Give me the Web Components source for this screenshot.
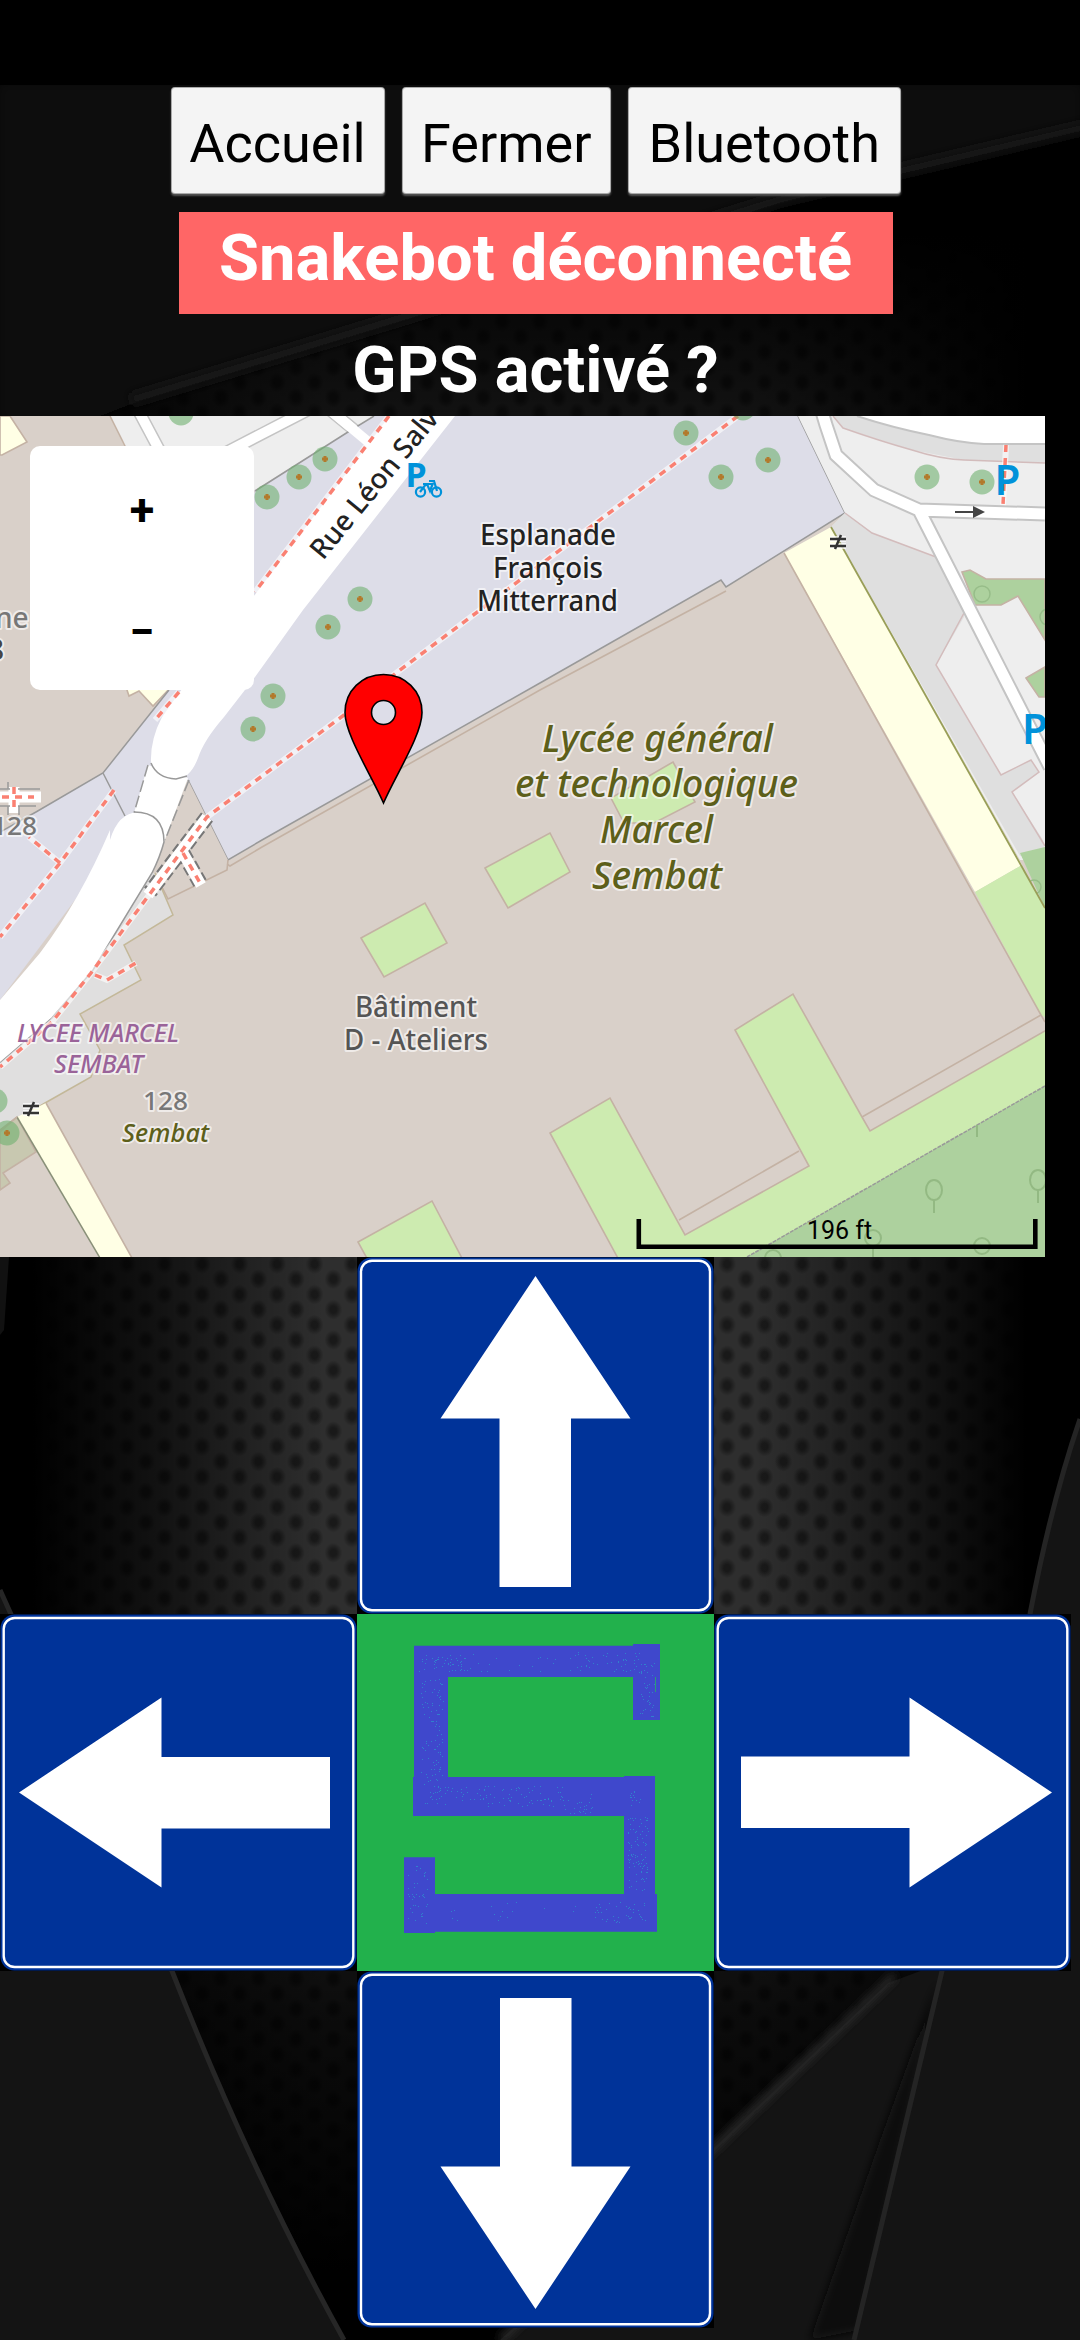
<!DOCTYPE html>
<html lang="fr">
<head>
<meta charset="utf-8">
<title>Snakebot</title>
<style>
body{margin:0;background:#000;font-family:Roboto,sans-serif}
</style>
</head>
<body>
<snake-app></snake-app>
<script>
const define=(name,html,setup)=>customElements.define(name,class extends HTMLElement{
  constructor(){
    super();
    const root=this.attachShadow({mode:'open'});
    const t=document.createElement('template');
    t.innerHTML=html;
    root.append(t.content.cloneNode(true));
    if(setup)setup(this,root);
  }
});

/* Carbon mesh with overlapping dark sheets */
define('carbon-backdrop',`
<style>:host{display:block}svg{display:block;width:100%;height:100%}</style>
<svg viewBox="0 0 1080 2340" preserveAspectRatio="none">
<defs>
<radialGradient id="dot"><stop offset=".35" stop-color="#191919"/><stop offset="1" stop-color="#191919" stop-opacity="0"/></radialGradient>
<pattern id="m" width="37.5" height="30.4" patternUnits="userSpaceOnUse" x="249" y="1264">
<rect width="37.5" height="30.4" fill="#2e2e2e"/>
<ellipse cx="9.4" cy="15.2" rx="9" ry="10" fill="url(#dot)"/>
<ellipse cx="28.1" cy="0" rx="9" ry="10" fill="url(#dot)"/><ellipse cx="28.1" cy="30.4" rx="9" ry="10" fill="url(#dot)"/>
</pattern>
<linearGradient id="h"><stop offset="0.03" stop-color="#000"/><stop offset=".15" stop-color="#000" stop-opacity=".6"/><stop offset=".3" stop-color="#000" stop-opacity="0"/><stop offset=".7" stop-color="#000" stop-opacity="0"/><stop offset=".84" stop-color="#000" stop-opacity=".5"/><stop offset=".95" stop-color="#000"/></linearGradient>
<linearGradient id="v" x2="0" y2="1"><stop offset=".1" stop-color="#000"/><stop offset=".18" stop-color="#000" stop-opacity=".6"/><stop offset=".5" stop-color="#000" stop-opacity="0"/><stop offset=".7" stop-color="#000" stop-opacity="0"/><stop offset=".86" stop-color="#000" stop-opacity=".75"/><stop offset=".97" stop-color="#000"/></linearGradient>
<filter id="b"><feGaussianBlur stdDeviation="4"/></filter>
</defs>
<rect width="1080" height="2340" fill="url(#m)"/>
<rect width="1080" height="2340" fill="url(#h)"/>
<rect width="1080" height="2340" fill="url(#v)"/>
<path d="M0 85H1080V130L778 204L413 318L131 404L90 420H0Z" fill="#0d0d0d" filter="url(#b)"/>
<path d="M1090 126L778 200L413 314L131 400" fill="none" stroke="#191919" stroke-width="12" filter="url(#b)"/>
<path d="M0 1590L172 1971Q250 2170 344 2340H0Z" fill="#141414"/>
<path d="M0 1590L172 1971Q250 2170 344 2340" fill="none" stroke="#262626" stroke-width="5"/>
<path d="M888 1983L716 2146L500 2340H860L950 1960Z" fill="#141414"/>
<path d="M895 1975L716 2146L500 2340" fill="none" stroke="#303030" stroke-width="6" filter="url(#b)"/>
<path d="M938 1980L860 2330L810 2340L880 2140Z" fill="#090909" filter="url(#b)"/>
<path d="M1080 1419Q1052 1500 1030 1614L942 1971L854 2340H1080Z" fill="#141414"/>
<path d="M1080 1419Q1052 1500 1030 1614L942 1971L854 2340" fill="none" stroke="#242424" stroke-width="5"/>
<path d="M0 1257H9L4 1330L0 1335Z" fill="#111"/>
<rect width="1080" height="85" fill="#000"/>
</svg>`);

define('tool-button',`
<style>
:host{display:block}
button{display:flex;align-items:center;justify-content:center;width:100%;height:105px;padding:6px 0 0;border:0;border-radius:3px;background:#f4f4f4;box-shadow:0 0 0 1px #aaa,0 2px 2px 1px #555;color:#000;font:400 54px/63px Roboto,sans-serif;white-space:nowrap}
</style><button><slot></slot></button>`);

define('status-panel',`
<style>
:host{display:flex;flex-direction:column;align-items:center;color:#fff;font-weight:700;font-size:65px;line-height:75px;white-space:nowrap}
.s{box-sizing:border-box;width:714px;height:102px;padding-top:9px;background:#f66;text-align:center}
.g{margin-top:18.5px;height:83.5px}
</style><div class="s"><slot name="robot"></slot></div><div class="g"><slot name="gps"></slot></div>`);

define('zoom-control',`
<style>
:host{display:flex;flex-direction:column;width:224px;height:244px;border-radius:10px;background:#fff;overflow:hidden}
button{flex:1;border:0;background:none;padding:5px 0 0;color:#000;font:700 45px/50px Roboto,sans-serif}
button:first-child{padding-top:10px}
</style><button>+</button><button>−</button>`);

define('map-view',`
<style>
:host{display:block;position:relative;width:1045px;height:841px;overflow:hidden}
svg{display:block}
zoom-control{position:absolute;left:30px;top:30px}
text{font-family:"Noto Sans",sans-serif}
.g,.edge{fill:none;stroke:#999;stroke-width:1.5}
.t{stroke:#c4b2a4;stroke-width:1.6}
.w{fill:none;stroke:#fff}.c{fill:none;stroke:#c4c4c4}
.halo{fill:none;stroke:#fff;stroke-opacity:.6;stroke-width:6}
.foot{fill:none;stroke:#fa8072;stroke-width:3.5;stroke-dasharray:7 6}
.lab{paint-order:stroke;stroke:#fff;stroke-opacity:.6;stroke-width:4px;stroke-linejoin:round;font-weight:500}
</style>
<svg width="1045" height="841" viewBox="0 416 1045 841">
<rect y="416" width="1045" height="841" fill="#d9d0c9"/>
<path d="M0 416H10L27 442L2 455H0ZM127 690L129 696L139 691L153 706L172 686V680H120Z" fill="#ffffe5" class="t"/>
<path d="M110 416L125 446L200 560L255 490L348 432L374 416Z" fill="#eee"/><path d="M110 416L127 450" class="g t"/>
<g class="c" stroke-width="13"><path d="M137 408L162 455M225 453L308 410M330 410L375 447"/></g>
<g class="w" stroke-width="10"><path d="M137 408L162 455M225 453L308 410M330 410L375 447"/></g>
<path d="M0 832L36 812L103 773L169 690L255 491L348 432L374 416H798L845 513L726 587L721 580L540 683L262 840L228 860L188 780L140 830L90 880L0 1000Z" fill="#dddde8"/>
<path d="M0 832L36 812L103 773L169 690M255 491L348 432L374 416M798 416L845 513L726 587L721 580L540 683L262 840L228 860L188 780M103 773L125 816" class="g"/>
<path d="M330 410L378 450" class="w" stroke-width="10"/>
<path d="M726 591L540 690L262 847L230 866L222 861" class="g t"/>
<path d="M188 780L228 860L225 872L168 899L152 873L164 840Z" fill="#d9d0c9"/><path d="M228 860L227 870L168 899L155 873" class="g t"/>
<path d="M152 873L155 873L173 915L124 945L141 980L80 1014L100 1050L91 1077L45 1103L0 1130V1063L93 970Z" fill="#e0dfdf"/>
<path d="M155 873L173 915L124 945L141 980L80 1014L100 1050L91 1077L45 1103L0 1130" class="g" style="stroke:#c3b899"/>
<path d="M0 1130L17 1117L36 1152L3 1173L10 1183L0 1190Z" fill="#c8c8b0" class="t"/>
<path d="M17 1117L46 1103L132 1258H100Z" fill="#ffffe5"/><path d="M17 1117L100 1258" class="g" style="stroke:#899078"/><path d="M46 1103L132 1258M0 1132L17 1117" class="g t"/>
<!-- main street and its covered passage -->
<path d="M394 410H460L455 416L303 610L255 677L224 717Q204 740 198 758Q190 779 176 779Q157 778 151 763Q150 740 162 717L179 693L257 592Z" fill="#fff"/>
<path d="M148 765L134 813L164 842L188 778Z" fill="#fff"/><path d="M148 765L134 813M189 780L165 840" class="g" stroke-dasharray="12 4"/><path d="M151 763Q157 778 176 779L187 776" class="g"/>
<path d="M110 840Q118 813 138 812Q164 815 164 842Q160 857 152 873L93 970L52 1018L0 1063V1000L40 953Q80 900 110 830Z" fill="#fff"/>
<path d="M134 812Q164 812 164 842Q160 857 152 873L93 970L52 1018L0 1063" class="g"/>
<!-- east district -->
<path d="M798 416H1045V860H1020L831 527L845 513Z" fill="#eee"/>
<path d="M845 513L872 533L936 557L964 600V617L936 665L1001 775L1031 760L1039 772L1012 792L1043 840L1045 850L1020 856L831 527Z" fill="#dfdfdf"/>
<path d="M845 513L872 533L936 557M964 613L936 665L1001 775L1031 760L1039 772L1012 792L1045 846" fill="none" stroke="#d3bcbc" stroke-width="1.5"/>
<path d="M833 416L843 428L912 450L964 460L1045 463V416Z" fill="#dfdfdf"/><path d="M833 416L843 428Q880 441 912 450Q940 459 964 460L1045 463" fill="none" stroke="#d3bcbc" stroke-width="1.5"/>
<path d="M857 416Q890 427 929 435Q960 443 984 444H1045V416Z" fill="#fff"/><path d="M857 416Q890 427 929 435Q960 443 984 444H1045" class="c" stroke-width="2"/>
<path d="M962 572L970 570L986 579H1045V640L1018 596L1001 605H975ZM1026 678L1045 667V697H1039Z" fill="#add19e" class="t"/>
<g fill="none" stroke="#97bd89" stroke-width="1.5"><circle cx="982" cy="594" r="8"/><circle cx="1048" cy="617" r="8"/></g>
<path d="M820 405L826 425L836 455L874 490L919 510L1045 514M920 512L1050 767" class="c" stroke-width="15"/>
<path d="M820 405L826 425L836 455L874 490L919 510L1045 514M920 512L1050 767" class="w" stroke-width="11"/>
<path d="M955 512H975" stroke="#444" stroke-width="2"/><path d="M973 506L985 512L973 518Z" fill="#444"/>
<path d="M784 553L831 527L1022 865L975 892Z" fill="#ffffe5"/>
<path d="M1020 853L1045 847V908Z" fill="#add19e"/><circle cx="1034" cy="887" r="7" fill="none" stroke="#97bd89" stroke-width="1.5"/>
<path d="M975 892L1022 865L1045 908V1017L1041 1015Z" fill="#cdebb0"/>
<path d="M784 553L1041 1015L1045 1022" class="g t"/><path d="M831 527L1045 908" class="g" style="stroke:#999e58;stroke-width:1.8"/>
<!-- courtyards and wood -->
<g fill="#cdebb0" class="t">
<path d="M1050 1028L870 1131L862 1117L793 994L735 1030L809 1166L685 1235L610 1098L550 1133L620 1262H1050Z"/>
<path d="M361 938L425 903L447 943L384 977ZM485 868L550 833L570 872L508 908ZM673 762L695 802L654 823H624L611 798ZM358 1242L432 1201L464 1262H369Z"/></g>
<path d="M862 1117L1041 1015M679 1220L799 1151" class="g t"/>
<path d="M1045 1086L747 1257H1045Z" fill="#add19e"/><path d="M1045 1086L747 1257" class="g" stroke-dasharray="4 1"/>
<g fill="none" stroke="#93b983" stroke-width="2"><ellipse cx="934" cy="1190" rx="8" ry="10"/><path d="M934 1200V1213M1038 1190V1203M873 1248V1257M977 1125V1137"/><ellipse cx="1038" cy="1180" rx="8" ry="10"/><circle cx="873" cy="1238" r="8"/><circle cx="982" cy="1246" r="8"/><circle cx="773" cy="1258" r="8"/></g>
<!-- footpaths -->
<path d="M207 817L150 892M183 853L200 883" stroke="#777" stroke-width="15" fill="none" stroke-dasharray="9 4"/>
<path d="M207 817L148 895M183 853L201 885M0 797H41M14 787V813" class="w" stroke-width="11"/>
<path d="M0 789H10M18 789H40M0 806H10M18 806H36M8 789V782M19 806V815M8 806V815" class="g"/>
<path class="halo" d="M389 416L255 592M179 692L155 720M738 416L540 565L396 673L344 715L207 817L158 883L91 973L52 1022L0 1067M95 975L107 980L136 963M114 790L60 863L0 937M60 863L29 837M1006 445L1003 505"/>
<path class="foot" d="M389 416L255 592M179 692L155 720M738 416L540 565L396 673L344 715L207 817L158 883L91 973L52 1022L0 1067M95 975L107 980L136 963M183 853L200 883M114 790L60 863L0 937M60 863L29 837M1006 445L1003 505M2 797H34M14 787V813"/>
<g id="trees"></g>
<!-- gates -->
<g stroke="#fff" stroke-opacity=".7" stroke-width="6"><path d="M830 539H846M830 546H846M23 1106H39M23 1113H39"/></g>
<g stroke="#333" stroke-width="2.5" fill="none"><path d="M830 539H846M830 546H846M841 535L835 549M23 1106H39M23 1113H39M34 1102L28 1116"/></g>
<g fill="#0092da" font-weight="600"><text x="994.500" y="495" font-size="42">P</text><text x="1022" y="744" font-size="42">P</text><text x="405.500" y="487" font-size="34" font-weight="700">P</text></g>
<g fill="none" stroke="#0092da" stroke-width="2.2"><circle cx="420.500" cy="492" r="4.6"/><circle cx="436.500" cy="492" r="4.6"/><path d="M420 492L426 484H432M423 484H427L430 491L433 483M429 481H434L437 491"/></g>
<text class="lab" font-size="28" fill="#222" transform="translate(323 561) rotate(-50.5)" textLength="184" lengthAdjust="spacingAndGlyphs">Rue Léon Salv</text>
<g fill="#222" font-size="28" class="lab"><text x="480" y="545" textLength="136" lengthAdjust="spacingAndGlyphs">Esplanade</text><text x="493" y="578" textLength="110" lengthAdjust="spacingAndGlyphs">François</text><text x="477" y="611" textLength="141" lengthAdjust="spacingAndGlyphs">Mitterrand</text></g>
<g fill="#5d5f1a" font-size="37.5" font-style="italic" class="lab"><text x="542" y="752" textLength="231" lengthAdjust="spacingAndGlyphs">Lycée général</text><text x="515" y="797" textLength="283" lengthAdjust="spacingAndGlyphs">et technologique</text><text x="600" y="843" textLength="113" lengthAdjust="spacingAndGlyphs">Marcel</text><text x="592" y="889" textLength="130" lengthAdjust="spacingAndGlyphs">Sembat</text></g>
<g fill="#555" font-size="28" class="lab"><text x="355" y="1017" textLength="122" lengthAdjust="spacingAndGlyphs">Bâtiment</text><text x="344" y="1050" textLength="144" lengthAdjust="spacingAndGlyphs">D - Ateliers</text></g>
<g fill="#9a6399" font-size="25" font-style="italic" class="lab"><text x="17" y="1042" textLength="162" lengthAdjust="spacingAndGlyphs">LYCEE MARCEL</text><text x="54" y="1073" textLength="89" lengthAdjust="spacingAndGlyphs">SEMBAT</text></g>
<g fill="#777" font-size="26" class="lab"><text x="143" y="1110" textLength="45" lengthAdjust="spacingAndGlyphs">128</text><text x="-8" y="835" textLength="45" lengthAdjust="spacingAndGlyphs">128</text><text x="-5" y="628" font-size="28">ne</text><text x="-12" y="660" font-size="28" fill="#444">8</text></g>
<text x="122" y="1142" font-size="26" fill="#5d5f1a" font-style="italic" class="lab" textLength="87" lengthAdjust="spacingAndGlyphs">Sembat</text>
<path d="M383.5 803C372 776 345 735 345 712.500C345 691 362 674.500 383.500 674.500S422 691 422 712.500C422 735 395 776 383.500 803ZM383.500 700.500a12 12 0 1 0 0 24a12 12 0 1 0 0-24Z" fill="#f00" fill-rule="evenodd" stroke="#000" stroke-width="1.6"/>
<path d="M638.800 1219V1246.700H1035.300V1219" fill="none" stroke="#000" stroke-width="4.6"/>
<text x="839.500" y="1239" text-anchor="middle" font-size="25" style="font-family:Roboto,sans-serif">196 ft</text>
</svg>
<zoom-control></zoom-control>`,(el,root)=>{
  const pts=[[686,433],[721,477],[768,460],[743,408],[927,477],[982,482],[181,413],[325,459],[299,477],[267,497],[360,599],[328,627],[273,696],[253,729],[-5,1101],[7,1133]];
  root.querySelector('#trees').innerHTML=pts.map(([x,y])=>`<circle cx="${x}" cy="${y}" r="12.5" fill="#6fb16f" fill-opacity=".6"/><path d="M${x-3} ${y}h6M${x} ${y-3}v6" stroke="#b27a2c" stroke-width="3"/>`).join('');
});

define('arrow-key',`
<style>
:host{display:block;width:357px;height:357px}
svg{display:block;transform:rotate(var(--turn,0deg))}
</style>
<svg width="357" height="357" viewBox="0 0 357 357">
<rect width="357" height="357" fill="#000"/>
<rect x=".5" y=".5" width="356" height="356" rx="14" fill="#039"/>
<rect x="4" y="3.700" width="349" height="349.600" rx="11" fill="none" stroke="#fff" stroke-width="2.400"/>
<path d="M178.500 19L273.500 161.500H214V330H142.500V161.500H83.500Z" fill="#fff"/>
</svg>`);

define('snake-logo',`
<style>:host{display:block;width:357px;height:357px}svg{display:block}</style>
<svg width="357" height="357" viewBox="0 0 357 357">
<rect width="357" height="357" fill="#22b14c"/>
<path fill="#3f48cc" d="M57 31.700H276V30H303V106H276V63H91V163H267V162H298V280H300V317.700H78V319H47V243.300H78V280H267V202H56V163H57Z"/>
<path id="dots" fill="none" stroke="#3180cc" stroke-width="1"/>
<path d="M298.500 63V78" stroke="#2b9a7a"/>
</svg>`,(el,root)=>{
  let seed=7;
  const rnd=()=>(seed=(seed*16807)%2147483647)/2147483647;
  const areas=[[62,40,45,18,45],[107,40,120,18,22],[215,38,70,20,45],[281,45,16,58,45],[64,64,22,112,95],[66,172,140,20,105],[206,180,30,20,25],[272,177,12,14,14],[271,202,20,76,90],[238,288,52,20,45],[50,250,20,60,42],[80,288,140,20,16]];
  root.querySelector('#dots').setAttribute('d',areas.map(([x,y,w,h,n])=>Array.from({length:n},()=>`M${Math.round(x+rnd()*w)} ${Math.round(y+rnd()*h)+.5}h1`).join('')).join(''));
});

define('direction-pad',`
<style>
:host{display:grid;grid-template:repeat(3,357px)/repeat(3,357px)}
.u,.d{grid-column:2}.d{--turn:180deg}.l{--turn:-90deg}.r{--turn:90deg}
.l{grid-column:1}
</style>
<arrow-key class="u"></arrow-key><arrow-key class="l"></arrow-key><snake-logo></snake-logo><arrow-key class="r"></arrow-key><arrow-key class="d"></arrow-key>`);

define('snake-app',`
<style>
:host{display:block;position:relative;width:1080px;height:2340px;overflow:hidden}
carbon-backdrop{position:absolute;inset:0}
main{position:relative;box-sizing:border-box;width:1071px;padding-top:88px;display:flex;flex-direction:column}
nav{display:flex;justify-content:center;gap:19.500px;margin-bottom:19px}
</style>
<carbon-backdrop></carbon-backdrop>
<main>
<nav><tool-button style="width:212px">Accueil</tool-button><tool-button style="width:206.500px">Fermer</tool-button><tool-button style="width:270.500px">Bluetooth</tool-button></nav>
<status-panel><span slot="robot">Snakebot déconnecté</span><span slot="gps">GPS activé ?</span></status-panel>
<map-view></map-view>
<direction-pad></direction-pad>
</main>`);
</script>
</body>
</html>
